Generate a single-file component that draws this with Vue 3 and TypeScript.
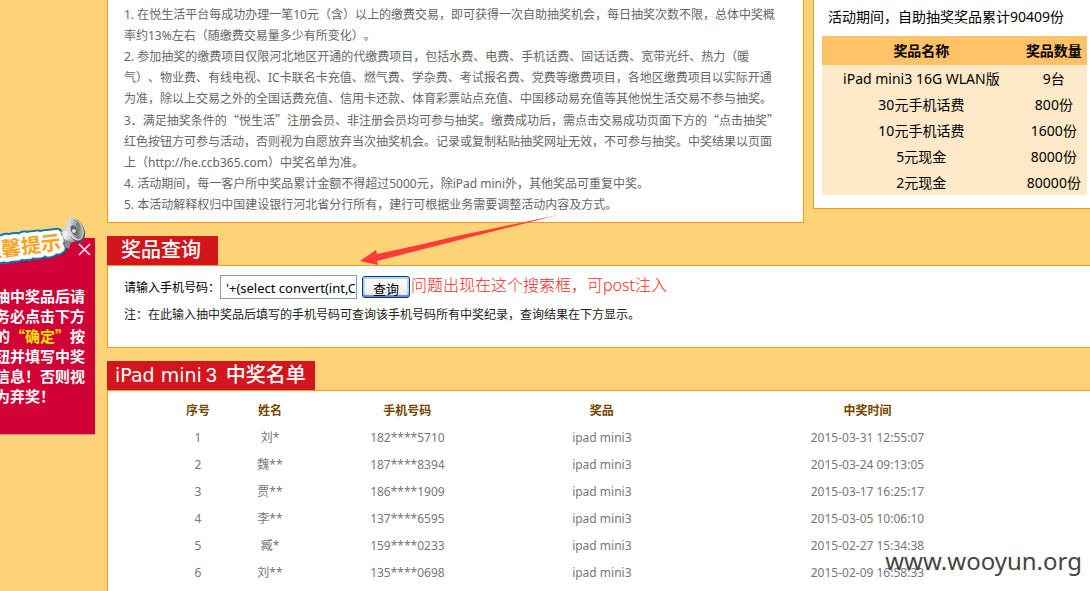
<script setup lang="ts">
import { ref } from 'vue'

interface Prize {
  name: string
  count: string
}

interface Winner {
  no: number
  name: string
  phone: string
  prize: string
  time: string
}

const phone = ref("'+(select convert(int,CHAR(52)))+'")
const noticeOpen = ref(true)

const prizes: Prize[] = [
  { name: 'iPad mini3 16G WLAN版', count: '9台' },
  { name: '30元手机话费', count: '800份' },
  { name: '10元手机话费', count: '1600份' },
  { name: '5元现金', count: '8000份' },
  { name: '2元现金', count: '80000份' },
]

const winners: Winner[] = [
  { no: 1, name: '刘*', phone: '182****5710', prize: 'ipad mini3', time: '2015-03-31 12:55:07' },
  { no: 2, name: '魏**', phone: '187****8394', prize: 'ipad mini3', time: '2015-03-24 09:13:05' },
  { no: 3, name: '贾**', phone: '186****1909', prize: 'ipad mini3', time: '2015-03-17 16:25:17' },
  { no: 4, name: '李**', phone: '137****6595', prize: 'ipad mini3', time: '2015-03-05 10:06:10' },
  { no: 5, name: '臧*', phone: '159****0233', prize: 'ipad mini3', time: '2015-02-27 15:34:38' },
  { no: 6, name: '刘**', phone: '135****0698', prize: 'ipad mini3', time: '2015-02-09 16:58:33' },
]
</script>

<template>
  <div class="page">
    <aside v-if="noticeOpen" class="notice">
      <svg class="sticker" width="92" height="52" viewBox="0 0 92 52" aria-hidden="true">
        <defs>
          <linearGradient id="cone" x1="0" y1="0" x2="1" y2="1">
            <stop offset="0" stop-color="#8d9296" />
            <stop offset="0.4" stop-color="#f6f6f6" />
            <stop offset="1" stop-color="#5d6266" />
          </linearGradient>
          <linearGradient id="bell" x1="0" y1="0" x2="1" y2="1">
            <stop offset="0" stop-color="#ffffff" />
            <stop offset="0.35" stop-color="#b4b7ba" />
            <stop offset="0.6" stop-color="#74787c" />
            <stop offset="1" stop-color="#e8e8e8" />
          </linearGradient>
        </defs>
        <g class="sticker-text" transform="rotate(-7 30 30)">
          <text class="edge" x="-19" y="37">温馨提示</text>
          <text class="rim" x="-19" y="37">温馨提示</text>
          <text class="face" x="-19" y="37">温馨提示</text>
        </g>
        <path d="M61 16 Q66 13 67 5 L80 25 Q72 25 67 29 Z" fill="url(#cone)" />
        <path d="M64 24 L71 25 L69 33 L65 31 Z" fill="#8b8f93" />
        <ellipse cx="76" cy="14" rx="8" ry="13" transform="rotate(-24 76 14)" fill="#3d5360" />
        <ellipse cx="75" cy="13" rx="8" ry="12" transform="rotate(-24 75 13)" fill="#d6d8da" />
        <ellipse cx="76" cy="13" rx="6" ry="11" transform="rotate(-24 76 13)" fill="url(#bell)" />
        <ellipse cx="74" cy="14" rx="3" ry="5" transform="rotate(-24 74 14)" fill="#5a5e62" />
        <circle cx="74" cy="15" r="2" fill="#e2e2e2" />
      </svg>
      <button class="close" type="button" aria-label="关闭" @click="noticeOpen = false">
        <svg width="13" height="13" viewBox="0 0 13 13"><path d="M1 1L12 12M12 1L1 12" stroke="#fff" stroke-width="1.5" /></svg>
      </button>
      <p class="notice-text">
        抽中奖品后请<br />务必点击下方<br />的<em>“确定”</em>按<br />钮并填写中奖<br />信息！否则视<br />为弃奖！
      </p>
    </aside>

    <main class="content">
      <div class="top">
        <section class="rules">
          <p>1. 在悦生活平台每成功办理一笔10元（含）以上的缴费交易，即可获得一次自助抽奖机会，每日抽奖次数不限，总体中奖概<br />率约13%左右（随缴费交易量多少有所变化）。</p>
          <p>2. 参加抽奖的缴费项目仅限河北地区开通的代缴费项目，包括水费、电费、手机话费、固话话费、宽带光纤、热力（暖<br />气）、物业费、有线电视、IC卡联名卡充值、燃气费、学杂费、考试报名费、党费等缴费项目，各地区缴费项目以实际开通<br />为准，除以上交易之外的全国话费充值、信用卡还款、体育彩票站点充值、中国移动易充值等其他悦生活交易不参与抽奖。</p>
          <p>3．满足抽奖条件的<span class="cjk">“悦生活”</span>注册会员、非注册会员均可参与抽奖。缴费成功后，需点击交易成功页面下方的<span class="cjk">“点击抽奖”</span><br />红色按钮方可参与活动，否则视为自愿放弃当次抽奖机会。记录或复制粘贴抽奖网址无效，不可参与抽奖。中奖结果以页面<br />上（http://he.ccb365.com）中奖名单为准。</p>
          <p>4. 活动期间，每一客户所中奖品累计金额不得超过5000元，除iPad mini外，其他奖品可重复中奖。</p>
          <p>5. 本活动解释权归中国建设银行河北省分行所有，建行可根据业务需要调整活动内容及方式。</p>
        </section>

        <section class="prizes">
          <p class="total">活动期间，自助抽奖奖品累计90409份</p>
          <table class="prize-table">
            <colgroup><col class="p-name" /><col /></colgroup>
            <thead>
              <tr><th scope="col">奖品名称</th><th scope="col">奖品数量</th></tr>
            </thead>
            <tbody>
              <tr v-for="p in prizes" :key="p.name"><td>{{ p.name }}</td><td>{{ p.count }}</td></tr>
            </tbody>
          </table>
        </section>
      </div>

      <section class="block">
        <h2 class="tab tab-query">奖品查询</h2>
        <div class="panel query">
          <form class="search" @submit.prevent>
            <label for="phone">请输入手机号码：</label>
            <input id="phone" v-model="phone" type="text" />
            <button type="submit">查询</button>
            <span class="remark">问题出现在这个搜索框，可post注入</span>
          </form>
          <p class="hint">注：在此输入抽中奖品后填写的手机号码可查询该手机号码所有中奖纪录，查询结果在下方显示。</p>
        </div>
        <svg class="arrow" width="200" height="52" viewBox="0 0 200 52" aria-hidden="true">
          <path d="M0 47 L16 36 L17 40 Q60 31 97 22 L198 1 L99 26 Q60 36 17 47 L18 51 Z" fill="#fe3b38" />
        </svg>
      </section>

      <section class="block">
        <h2 class="tab tab-list"><span class="latin">iPad mini</span><span class="digit">3</span>中奖名单</h2>
        <div class="panel list">
          <table class="winner-table">
            <colgroup><col class="w-no" /><col class="w-name" /><col class="w-phone" /><col class="w-prize" /><col /></colgroup>
            <thead>
              <tr>
                <th scope="col">序号</th><th scope="col">姓名</th><th scope="col">手机号码</th><th scope="col">奖品</th><th scope="col">中奖时间</th>
              </tr>
            </thead>
            <tbody>
              <tr v-for="w in winners" :key="w.no">
                <td>{{ w.no }}</td><td>{{ w.name }}</td><td>{{ w.phone }}</td><td>{{ w.prize }}</td><td>{{ w.time }}</td>
              </tr>
            </tbody>
          </table>
        </div>
      </section>
    </main>

    <div class="watermark">www.wooyun.org</div>
  </div>
</template>

<style>
body {
  margin: 0;
  background: #fed277;
}
</style>

<style scoped>
.page {
  position: relative;
  height: 100vh;
  overflow: hidden;
  background: #fed277;
  font-family: "Noto Sans", "Noto Sans CJK SC", sans-serif;
  font-size: 12px;
  line-height: 21px;
  color: #000;
  text-spacing-trim: space-all;
}
p, h2 { margin: 0; }
.cjk { font-family: "Noto Sans CJK SC", sans-serif; }
.content { padding-left: 107px; }
.top {
  display: grid;
  grid-template-columns: minmax(0, 697fr) minmax(0, 277fr);
  align-items: start;
  gap: 9px;
}
.rules {
  padding: 4px 16px 7px;
  border: 1px solid #fe9717;
  border-top: 0;
  background: #fff;
  color: #666;
  white-space: nowrap;
}
.prizes {
  padding: 6px 3px 13px 8px;
  border: solid #fe9717;
  border-width: 0 0 1px 1px;
  background: #fff;
  font-size: 14px;
}
.total { padding: 0 6px 9px; white-space: nowrap; }
table { border-collapse: collapse; table-layout: fixed; width: 100%; }
th, td { padding: 0; text-align: center; white-space: nowrap; }
.prize-table { background: #ffe9c8; }
.prize-table th { height: 29px; background: #ffc266; }
.prize-table td { height: 26px; }
.p-name { width: 75%; }

.block { position: relative; margin-top: 13px; }
.tab {
  display: flex;
  align-items: center;
  box-sizing: border-box;
  width: max-content;
  height: 29px;
  padding-bottom: 1px;
  background: #d3161d;
  color: #fff;
  font-size: 20px;
  font-weight: 500;
  line-height: 28px;
}
.tab-query { padding-left: 14px; padding-right: 17px; }
.tab-list { padding-left: 8px; padding-right: 9px; }
.latin { font-family: "DejaVu Sans", sans-serif; font-size: 19px; font-weight: 400; }
.digit { margin: 0 9px 0 4px; font-family: "Liberation Sans", sans-serif; font-weight: 400; }
.panel {
  border: solid #fe9717;
  border-width: 1px 0 1px 1px;
  background: #fff;
}
.query { padding: 8px 16px 22px; }
.search { display: flex; align-items: center; height: 26px; }
.search input {
  box-sizing: border-box;
  width: 137px;
  height: 24px;
  padding: 1px 1px 0 5px;
  border: 1px solid #7f9db9;
  background: #fff;
  color: #000;
  font: inherit;
  font-size: 13px;
}
.search button {
  box-sizing: border-box;
  width: 48px;
  height: 22px;
  margin-left: 5px;
  padding: 3px 0 0;
  border: 1px solid #003c74;
  border-radius: 3px;
  background: linear-gradient(#fff, #ecebe6);
  box-shadow: inset 0 -2px 1px #6982ee, inset 0 0 0 2px #bcd4f6;
  font: inherit;
  font-size: 13px;
  line-height: 16px;
}
.remark {
  padding: 0 0 4px 1px;
  color: #ff2626;
  font-size: 16px;
  font-weight: 300;
  white-space: nowrap;
}
.hint { padding-top: 4px; color: #222; }
.arrow { position: absolute; left: 253px; top: -22px; }
.list { padding: 6px 50px 20px 54px; }
.winner-table th, .winner-table td { height: 27px; }
.winner-table th { color: #744600; }
.winner-table td { color: #777; }
.w-no, .w-name { width: 8.2%; }
.w-phone { width: 23.1%; }
.w-prize { width: 21.2%; }

.notice {
  position: absolute;
  left: 0;
  top: 238px;
  box-sizing: border-box;
  width: 95px;
  padding: 48px 0 28px;
  border-bottom: 1px solid #c98a9a;
  background: #d10036;
  color: #fff;
}
.notice-text {
  display: block;
  margin-left: -5px;
  font-family: "Noto Sans CJK SC", sans-serif;
  font-size: 15px;
  font-weight: 700;
  line-height: 20px;
  white-space: nowrap;
}
.notice-text em { color: #ffe400; font-style: normal; }
.sticker { position: absolute; left: 0; top: -22px; }
.sticker-text {
  font-family: "Noto Sans CJK SC", sans-serif;
  font-size: 20px;
  font-weight: 700;
  stroke-linejoin: round;
}
.edge { fill: #0b78b0; stroke: #0b78b0; stroke-width: 12px; }
.rim { fill: #fff; stroke: #fff; stroke-width: 8px; }
.face { fill: #fba21c; }
.close {
  position: absolute;
  right: 4px;
  top: 5px;
  display: flex;
  padding: 0;
  border: 0;
  background: none;
}
.watermark {
  position: absolute;
  right: 8px;
  bottom: 12px;
  color: #444;
  font-size: 24px;
  line-height: 36px;
}
</style>
